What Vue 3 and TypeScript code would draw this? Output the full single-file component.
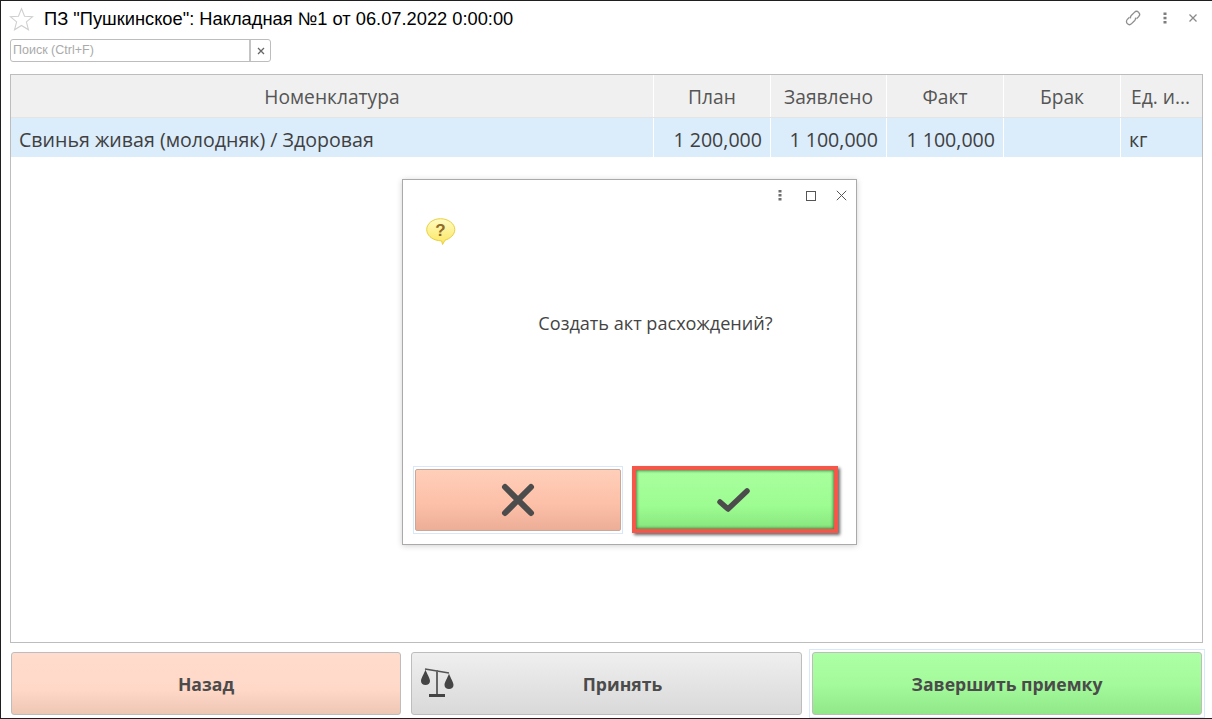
<script setup lang="ts">
const columns = [
  { title: 'Номенклатура', value: 'Свинья живая (молодняк) / Здоровая', kind: 'name' },
  { title: 'План', value: '1 200,000', kind: 'num' },
  { title: 'Заявлено', value: '1 100,000', kind: 'num' },
  { title: 'Факт', value: '1 100,000', kind: 'num' },
  { title: 'Брак', value: '', kind: 'num' },
  { title: 'Ед. и...', value: 'кг', kind: 'unit' },
]
</script>

<template>
  <div class="window">
    <header class="titlebar">
      <svg class="star" width="25" height="25" viewBox="0 0 24 24">
        <path d="M12 1.5l2.9 7.300 7.800.5-6 5 2 7.600L12 17.700l-6.700 4.200 2-7.600-6-5 7.800-.5z" fill="#fff" stroke="#cfcfcf" stroke-width="1" />
      </svg>
      <h1 class="title">ПЗ "Пушкинское": Накладная №1 от 06.07.2022 0:00:00</h1>
      <div class="win-tools">
        <svg width="18" height="18" viewBox="0 0 18 18" fill="none" stroke="#8e8e8e" stroke-width="1.300">
          <g transform="rotate(-45 9 9)">
            <path d="M7 6H4a3 3 0 0 0 0 6h4.500a3 3 0 0 0 2.500-1.500" />
            <path d="M11 12h3a3 3 0 0 0 0-6H9.500A3 3 0 0 0 7 7.500" />
          </g>
        </svg>
        <svg width="6" height="14" viewBox="0 0 6 14" fill="#7d7d7d">
          <rect x="1.500" y="1.500" width="3" height="2.500" />
          <rect x="1.500" y="5.800" width="3" height="2.500" />
          <rect x="1.500" y="10" width="3" height="2.500" />
        </svg>
        <svg width="10" height="10" viewBox="0 0 10 10" stroke="#8a8a8a" stroke-width="1.300">
          <path d="M1.500 1.500l7 7M8.500 1.500l-7 7" />
        </svg>
      </div>
    </header>

    <div class="search">
      <span class="search-input">Поиск (Ctrl+F)</span>
      <span class="search-clear">
        <svg width="8" height="8" viewBox="0 0 8 8" stroke="#666" stroke-width="1.300"><path d="M1 1l6 6M7 1l-6 6" /></svg>
      </span>
    </div>

    <section class="table">
      <div class="grid head">
        <div v-for="c in columns" :key="c.title" class="th" :class="{ 'th-unit': c.kind === 'unit' }">{{ c.title }}</div>
      </div>
      <div class="grid row">
        <div v-for="c in columns" :key="c.title" class="td" :class="c.kind">{{ c.value }}</div>
      </div>
    </section>

    <footer class="actions">
      <button class="btn back">Назад</button>
      <button class="btn accept">
        <svg class="scales" width="34" height="32" viewBox="0 0 34 32">
          <path d="M5 2l24 4" stroke="#555" stroke-width="1.300" fill="none" />
          <path d="M17 3v25" stroke="#666" stroke-width="2" />
          <path d="M9 28.500h16" stroke="#444" stroke-width="3" />
          <path d="M5.500 2.500C4.500 6 1 11 1 14c0 2.500 2 4 4.500 4S10 16.500 10 14C10 11 6.500 6 5.500 2.500z" fill="#454545" />
          <path d="M29 6.500C28 10 24.500 15 24.500 18c0 2.500 2 4 4.500 4s4.500-1.500 4.500-4C33.500 15 30 10 29 6.500z" fill="#454545" />
        </svg>
        <span>Принять</span>
      </button>
      <div class="finish-ring">
        <button class="btn finish">Завершить приемку</button>
      </div>
    </footer>

    <div class="dialog">
      <div class="dialog-tools">
        <svg class="dialog-dots" width="4" height="11" viewBox="0 0 4 11" fill="#6e6e6e">
          <rect x="0.500" y="0" width="3" height="2.500" />
          <rect x="0.500" y="4" width="3" height="2.500" />
          <rect x="0.500" y="8" width="3" height="2.500" />
        </svg>
        <svg width="10" height="10" viewBox="0 0 10 10" fill="none" stroke="#555"><rect x="0.500" y="0.500" width="9" height="9" /></svg>
        <svg width="11" height="11" viewBox="0 0 11 11" stroke="#555" stroke-width="1"><path d="M.8.800l9.400 9.400M10.200.800L.8 10.200" /></svg>
      </div>
      <svg class="question" width="30" height="28" viewBox="0 0 30 28">
        <defs>
          <linearGradient id="bubble" x1="0" y1="0" x2="0" y2="1">
            <stop offset="0" stop-color="#fffbc4" />
            <stop offset="1" stop-color="#fbe760" />
          </linearGradient>
        </defs>
        <path d="M14.500.7C7 .7.7 5.500.7 11.500c0 5.500 5 10 11.500 11l3.500.5.800 3.500 2.500-4.300c5-1.500 9.800-5.500 9.800-10.700C28.800 5.500 22 .7 14.500.7z" fill="url(#bubble)" stroke="#e8cf3c" stroke-width="1" />
        <text x="14.500" y="18" text-anchor="middle" class="qmark">?</text>
      </svg>
      <p class="message">Создать акт расхождений?</p>
      <div class="dialog-actions">
        <div class="cancel-ring">
          <button class="dbtn cancel" aria-label="Нет">
            <svg width="34" height="34" viewBox="0 0 34 34" stroke="#4c4c4c" stroke-width="6" stroke-linecap="round"><path d="M4 4l26 26M30 4L4 30" /></svg>
          </button>
        </div>
        <button class="dbtn ok" aria-label="Да">
          <svg width="34" height="26" viewBox="0 0 34 26" fill="none" stroke="#4c4c4c" stroke-width="5.500" stroke-linecap="round" stroke-linejoin="round"><path d="M3 15l8 7L30 4" /></svg>
        </button>
      </div>
    </div>
  </div>
</template>

<style>
html, body { margin: 0; background: #fff; }
</style>

<style scoped>
.window {
  position: relative;
  box-sizing: border-box;
  width: 1212px;
  height: 719px;
  display: flex;
  flex-direction: column;
  padding: 0 9px 1px 9px;
  background: #fff;
  border-top: 1px solid #1f1f1f;
  border-left: 1px solid #1f1f1f;
  border-bottom: 1px solid #1f1f1f;
  overflow: hidden;
  font-family: "Open Sans", sans-serif;
}
.titlebar {
  display: flex;
  align-items: center;
  height: 36px;
  flex: none;
}
.star { margin-left: -1px; flex: none; }
.title {
  margin: 0 0 0 10px;
  font: 400 18.300px "Liberation Sans", sans-serif;
  color: #000;
  flex: 1;
  white-space: nowrap;
}
.win-tools {
  display: flex;
  align-items: center;
  gap: 20px;
  margin: 0 5px 3px 0;
}
.search {
  display: flex;
  box-sizing: border-box;
  width: 261px;
  height: 23px;
  flex: none;
  margin-top: 2px;
  border: 1px solid #bdbdbd;
  border-radius: 3px;
}
.search-input {
  flex: 1;
  padding-left: 2px;
  font: 12.500px/20px "Liberation Sans", sans-serif;
  color: #aaa;
  border-right: 2px solid #c4c4c4;
}
.search-clear {
  width: 19px;
  display: flex;
  align-items: center;
  justify-content: center;
}
.table {
  box-sizing: border-box;
  height: 569px;
  flex: none;
  margin-top: 12px;
  border: 1px solid #bdbdbd;
  background: #fff;
}
.grid {
  display: grid;
  grid-template-columns: 643px 117px 116px 117px 117px 1fr;
}
.head { height: 42px; background: #f0f0f0; }
.row { box-sizing: border-box; height: 40px; background: #dbecfb; border-top: 1px solid #e4e4e4; }
.th {
  display: flex;
  align-items: center;
  justify-content: center;
  font-size: 19.200px;
  color: #555;
  border-right: 1px solid #fff;
}
.th:last-child { border-right: 0; }
.th-unit { justify-content: flex-start; padding-left: 10px; }
.td {
  box-sizing: border-box;
  height: 39px;
  padding-top: 3px;
  font-size: 19.600px;
  line-height: 37px;
  color: #3f3f3f;
  white-space: nowrap;
  border-right: 1px solid #fff;
}
.td:last-child { border-right: 0; }
.td.name { padding-left: 8px; }
.td.num { text-align: right; padding-right: 8px; }
.td.unit { padding-left: 8px; }

.actions {
  display: grid;
  grid-template-columns: 390px 391px 390px;
  gap: 10px;
  margin: 9px 0 0 1px;
  height: 63px;
  flex: none;
}
.btn {
  position: relative;
  box-sizing: border-box;
  width: 100%;
  height: 63px;
  padding: 0;
  border: 1px solid #bdbdbd;
  border-radius: 3px;
  font: 700 17.600px "Open Sans", sans-serif;
  color: #4b4b4b;
}
.back { background: linear-gradient(#ffdccd 0%, #ffd8c8 60%, #eec6b4 100%); }
.accept { padding-left: 32px; background: linear-gradient(#efefef, #d9d9d9); }
.finish { background: linear-gradient(#adffa5 0%, #a4fb9b 50%, #90e888 100%); }
.scales { position: absolute; left: 8px; top: 14px; }
.finish-ring { height: 63px; outline: 1px solid #d9e9fb; outline-offset: 2px; }

.dialog {
  position: absolute;
  left: 401px;
  top: 178px;
  box-sizing: border-box;
  width: 455px;
  height: 366px;
  background: #fff;
  border: 1px solid #aaa;
  box-shadow: 0 1px 6px rgba(0, 0, 0, .18);
}
.dialog-tools {
  position: absolute;
  top: 10px;
  right: 9px;
  display: flex;
  align-items: center;
  gap: 20px;
}
.dialog-dots { margin-right: 4px; }
.question { position: absolute; left: 23px; top: 38px; }
.qmark { font: 700 17px "Liberation Sans", sans-serif; fill: #8f6a28; }
.message {
  position: absolute;
  left: 0;
  right: 0;
  top: 131px;
  margin: 0;
  padding-left: 52px;
  text-align: center;
  font-size: 18.100px;
  color: #444;
}
.dialog-actions {
  position: absolute;
  left: 10px;
  top: 286px;
  display: flex;
  gap: 9px;
  align-items: flex-start;
}
.cancel-ring {
  box-sizing: border-box;
  border: 1px solid #d8e8f8;
  padding: 2px 1px;
  height: 68px;
}
.dbtn {
  box-sizing: border-box;
  display: flex;
  align-items: center;
  justify-content: center;
  width: 206px;
  height: 62px;
  padding: 0;
  cursor: pointer;
}
.cancel {
  border: 1px solid #c9a89a;
  border-radius: 2px;
  background: linear-gradient(#ffcfba 0%, #fdc0a8 55%, #ecae97 100%);
}
.ok {
  height: 67px;
  padding-right: 3px;
  border: 4px solid #f4574a;
  background: linear-gradient(#a9ff9e 0%, #9dfc92 60%, #88e67e 100%);
  box-shadow: inset 0 0 3px 1px rgba(40, 90, 40, .7), 2px 2px 3px rgba(0, 0, 0, .6);
}
</style>
